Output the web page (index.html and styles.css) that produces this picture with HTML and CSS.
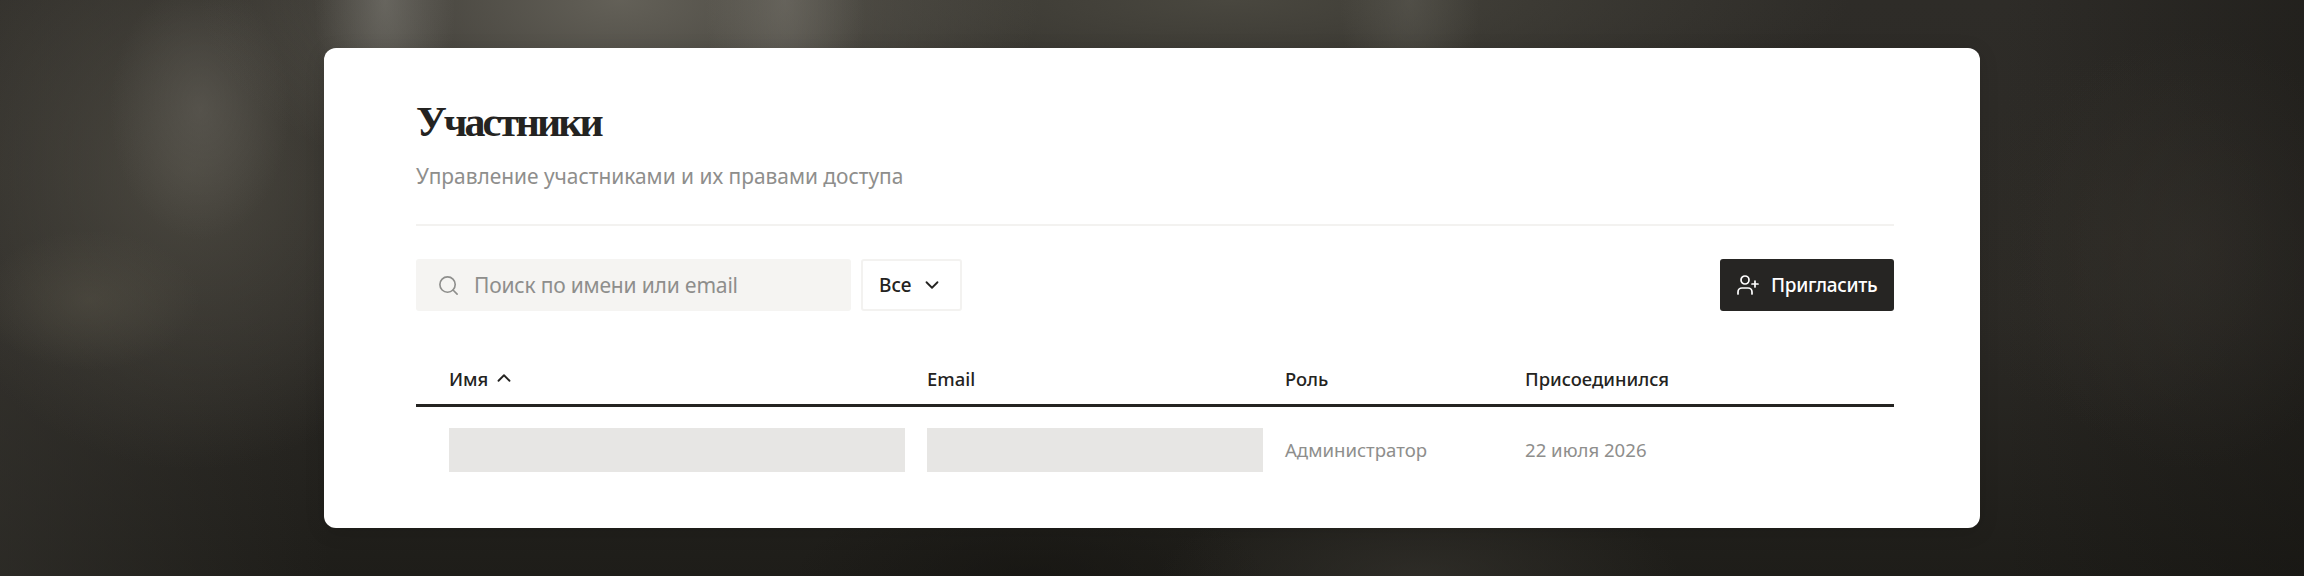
FILE: index.html
```html
<!DOCTYPE html>
<html lang="ru">
<head>
<meta charset="utf-8">
<title>Участники</title>
<link rel="stylesheet" href="styles.css">
</head>
<body>
<main class="card">
  <header class="head">
    <h1 class="title">Участники</h1>
    <p class="subtitle">Управление участниками и их правами доступа</p>
  </header>
  <div class="toolbar">
    <label class="search">
      <svg class="icon-search" viewBox="0 0 24 24" fill="none" stroke="currentColor" stroke-width="1.7" stroke-linecap="round" stroke-linejoin="round"><circle cx="11" cy="11" r="8"/><path d="m21 21-4.3-4.3"/></svg>
      <span class="placeholder">Поиск по имени или email</span>
    </label>
    <button class="filter" type="button">Все
      <svg class="icon-chev" viewBox="0 0 24 24" fill="none" stroke="currentColor" stroke-width="2" stroke-linecap="round" stroke-linejoin="round"><path d="m6 9 6 6 6-6"/></svg>
    </button>
    <button class="invite" type="button">
      <svg class="icon-invite" viewBox="0 0 24 24" fill="none" stroke="currentColor" stroke-width="1.7" stroke-linecap="round" stroke-linejoin="round"><path d="M16 21v-2a4 4 0 0 0-4-4H6a4 4 0 0 0-4 4v2"/><circle cx="9" cy="7" r="4"/><path d="M19 8v6"/><path d="M22 11h-6"/></svg>
      Пригласить
    </button>
  </div>
  <table class="members">
    <colgroup><col class="c1"><col class="c2"><col class="c3"><col class="c4"></colgroup>
    <thead>
      <tr>
        <th class="first"><span class="sort">Имя
          <svg class="icon-chev" viewBox="0 0 24 24" fill="none" stroke="currentColor" stroke-width="2" stroke-linecap="round" stroke-linejoin="round"><path d="m18 15-6-6-6 6"/></svg></span></th>
        <th>Email</th>
        <th>Роль</th>
        <th>Присоединился</th>
      </tr>
    </thead>
    <tbody>
      <tr>
        <td class="first"><div class="skeleton"></div></td>
        <td><div class="skeleton"></div></td>
        <td>Администратор</td>
        <td>22 июля 2026</td>
      </tr>
    </tbody>
  </table>
</main>
</body>
</html>
```

FILE: styles.css
```css
* { box-sizing: border-box; }
html, body { height: 100%; }
body {
  margin: 0;
  padding: 48px 324px;
  font-family: "Noto Sans", "Liberation Sans", sans-serif;
  color: #242321;
  overflow: hidden;
  background-color: #2a2824;
  background-image:
    radial-gradient(ellipse 70px 170px at 385px 0px, rgba(125,123,116,.6), transparent),
    radial-gradient(ellipse 80px 170px at 785px 0px, rgba(118,115,107,.55), transparent),
    radial-gradient(ellipse 420px 210px at 620px 0px, rgba(105,102,93,.9), transparent),
    radial-gradient(ellipse 70px 130px at 1410px 0px, rgba(100,98,90,.45), transparent),
    radial-gradient(ellipse 620px 130px at 1230px 0px, rgba(80,78,69,.8), transparent),
    radial-gradient(ellipse 90px 130px at 200px 110px, rgba(102,99,92,.5), transparent),
    radial-gradient(ellipse 110px 70px at 90px 300px, rgba(88,84,72,.45), transparent),
    radial-gradient(ellipse 280px 300px at 190px 170px, rgba(82,79,70,.75), transparent),
    radial-gradient(ellipse 180px 220px at 2190px 250px, rgba(52,49,44,.5), transparent),
    radial-gradient(ellipse 160px 190px at 2110px 240px, rgba(50,47,40,.4), transparent),
    radial-gradient(ellipse 260px 90px at 1420px 576px, rgba(58,56,50,.55), transparent),
    radial-gradient(ellipse 240px 80px at 1030px 576px, rgba(18,17,14,.5), transparent),
    linear-gradient(90deg, rgba(55,53,48,.55) 0, rgba(42,40,35,0) 330px, rgba(30,28,24,0) 2000px, rgba(18,17,14,.4) 100%),
    linear-gradient(180deg, #2e2c28 0, #2b2925 55%, #1e1d19 100%);
}
.card {
  height: 480px;
  padding: 0 86px 0 92px;
  background: #fff;
  border-radius: 12px;
  box-shadow: 0 4px 20px rgba(0,0,0,.12);
}
.head {
  padding: 51px 0 33px;
  border-bottom: 2px solid #f3f2f0;
}
.title {
  margin: 0;
  font: 700 42px/46px "Liberation Serif", serif;
  letter-spacing: -3px;
  color: #242321;
}
.subtitle {
  margin: 16px 0 0;
  font-size: 20.9px;
  line-height: 30px;
  color: #8e8e8c;
}
.toolbar {
  display: flex;
  align-items: stretch;
  gap: 10px;
  height: 52px;
  margin-top: 33px;
}
.search {
  display: flex;
  align-items: center;
  gap: 14px;
  width: 435px;
  padding-left: 21px;
  background: #f5f4f2;
  border-radius: 3px;
  color: #8e8e8c;
  font-size: 21px;
  letter-spacing: -.2px;
}
.icon-search { width: 23px; height: 23px; flex: none; }
.filter {
  display: flex;
  align-items: center;
  gap: 10px;
  width: 101px;
  padding: 0 0 0 16px;
  background: #fff;
  border: 2px solid #f3f2f0;
  border-radius: 3px;
  font: 500 19px "Noto Sans", sans-serif;
  color: #242321;
}
.icon-chev { width: 22px; height: 22px; flex: none; }
.invite {
  display: flex;
  align-items: center;
  gap: 11px;
  margin-left: auto;
  width: 174px;
  padding: 0 0 0 16px;
  background: #262523;
  border: 0;
  border-radius: 3px;
  font: 500 19px "Noto Sans", sans-serif;
  letter-spacing: -.3px;
  color: #fff;
}
.icon-invite { width: 24px; height: 24px; flex: none; }
.members {
  width: 1478px;
  margin-top: 32px;
  border-collapse: collapse;
  table-layout: fixed;
}
.c1 { width: 500px; }
.c2 { width: 358px; }
.c3 { width: 240px; }
th {
  height: 62px;
  padding: 10px 11px 0;
  border-bottom: 3px solid #242321;
  text-align: left;
  font-size: 18.4px;
  font-weight: 500;
  color: #242321;
}
td {
  padding: 21px 11px;
  font-size: 18.6px;
  color: #8e8e8c;
}
th.first, td.first { padding-left: 33px; }
.sort { display: inline-flex; align-items: center; gap: 5px; }
.skeleton { height: 44px; background: #e7e6e4; }
```
